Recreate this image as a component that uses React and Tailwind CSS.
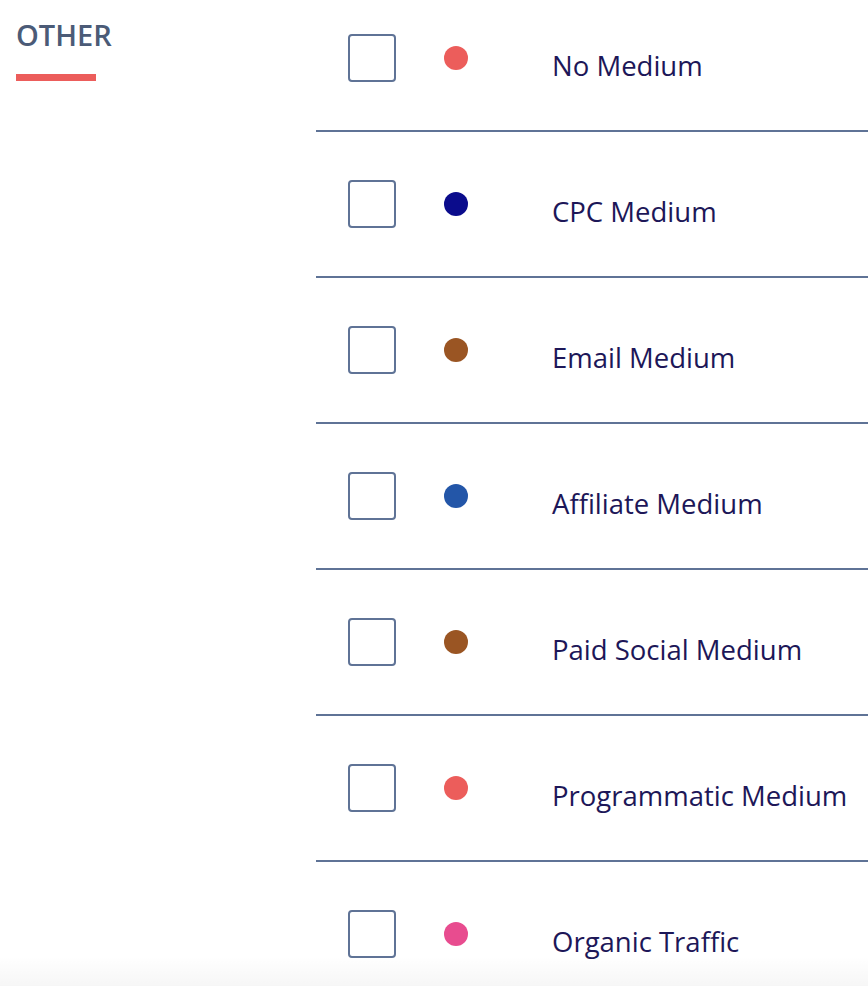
import React from 'react';

const items = [
  { label: 'No Medium', color: 'bg-[#ec5d5b]' },
  { label: 'CPC Medium', color: 'bg-[#0b0c8c]' },
  { label: 'Email Medium', color: 'bg-[#9a5523]' },
  { label: 'Affiliate Medium', color: 'bg-[#2356a8]' },
  { label: 'Paid Social Medium', color: 'bg-[#9a5523]' },
  { label: 'Programmatic Medium', color: 'bg-[#ec5d5b]' },
  { label: 'Organic Traffic', color: 'bg-[#e84c8f]' },
];

const Row = ({ item, first }) => (
  <div
    className={`flex items-start border-b-2 border-[#5f7396] pl-8 ${
      first ? 'h-[132px] pt-[34px]' : 'h-[146px] pt-[48px]'
    }`}
  >
    <div className="w-12 h-12 shrink-0 rounded-[4px] border-2 border-[#5f7396] bg-white" />
    <div className={`ml-12 mt-3 w-6 h-6 shrink-0 rounded-full ${item.color}`} />
    <div className="ml-[84px] mt-[18px] text-[27.5px] leading-none text-[#1d1758]">
      {item.label}
    </div>
  </div>
);

export default function App() {
  return (
    <div className="relative min-h-[986px] bg-white font-['Open_Sans',sans-serif] overflow-hidden">
      <div className="flex">
        <div className="w-[316px] shrink-0 pl-4 pt-5">
          <div className="text-[29px] leading-none font-semibold text-[#4b5b77]">
            OTHER
          </div>
          <div className="mt-[25px] w-20 h-[7px] bg-[#ec5d5b]" />
        </div>
        <div className="flex-1">
          {items.map((item, i) => (
            <Row key={item.label} item={item} first={i === 0} />
          ))}
        </div>
      </div>
      <div className="absolute left-0 right-0 top-[956px] h-[30px] bg-gradient-to-b from-transparent to-black/[0.035] pointer-events-none" />
    </div>
  );
}
